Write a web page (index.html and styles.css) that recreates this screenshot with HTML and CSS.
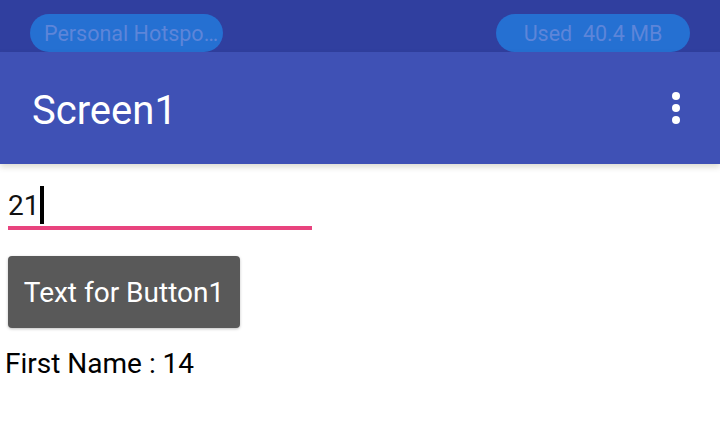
FILE: index.html
```html
<!DOCTYPE html>
<html lang="en">

<head>
    <meta charset="UTF-8">
    <meta name="viewport" content="width=device-width, initial-scale=1.0">
    <link rel="stylesheet" href="styles.css">
    <title>Screen1</title>
</head>

<body>
    <!-- Status bar -->
    <div class="status-bar">
        <span class="pill pill-left">Personal Hotspo…</span>
        <span class="pill pill-right">Used&nbsp; 40.4 MB</span>
    </div>

    <!-- Title bar -->
    <div class="toolbar">
        <h1>Screen1</h1>
        <svg class="menu" width="12" height="36" viewBox="0 0 12 36">
            <circle cx="6" cy="6" r="4" fill="#fff" />
            <circle cx="6" cy="18" r="4" fill="#fff" />
            <circle cx="6" cy="30" r="4" fill="#fff" />
        </svg>
    </div>

    <div class="content">
        <div class="text-box">
            <span class="value">21</span><span class="cursor"></span>
        </div>

        <button type="button">Text for Button1</button>

        <p class="label">First Name : 14</p>
    </div>
</body>

</html>
```

FILE: styles.css
```css
body {
    font-family: 'Roboto', sans-serif;
    margin: 0;
    padding: 0;
    background-color: #fff;
}

.status-bar {
    height: 52px;
    background-color: #303f9f;
    display: flex;
    justify-content: space-between;
    align-items: flex-start;
    padding: 14px 30px 0 30px;
    box-sizing: border-box;
}

.pill {
    height: 38px;
    border-radius: 19px;
    background-color: #2570d2;
    color: #5d85d9;
    font-size: 21.5px;
    line-height: 40px;
    text-align: center;
    white-space: nowrap;
    box-sizing: border-box;
}

.pill-left {
    width: 193px;
    padding-left: 9px;
}

.pill-right {
    width: 194px;
}

.toolbar {
    height: 112px;
    background-color: #3f51b5;
    display: flex;
    align-items: center;
    justify-content: space-between;
    padding: 4px 38px 0 32px;
    box-sizing: border-box;
    box-shadow: 0 3px 6px rgba(60, 60, 0, 0.18);
    position: relative;
}

.toolbar h1 {
    margin: 0;
    font-size: 40px;
    font-weight: 400;
    color: #fff;
}

.toolbar .menu {
    margin-top: -4px;
}

.content {
    padding: 20px 8px 0 8px;
}

.text-box {
    width: 304px;
    height: 42px;
    border-bottom: 4px solid #e8437e;
    display: flex;
    align-items: center;
}

.value {
    font-size: 28px;
    color: #111;
}

.cursor {
    width: 4px;
    height: 38px;
    background-color: #000;
    margin-left: 1px;
}

button {
    margin-top: 26px;
    width: 232px;
    height: 72px;
    background-color: #595959;
    color: #fff;
    border: none;
    border-radius: 4px;
    font-family: 'Roboto', sans-serif;
    font-size: 28px;
    padding: 0;
    box-shadow: 0 1px 3px rgba(0, 0, 0, 0.25);
}

.label {
    margin: 19px 0 0 -3px;
    font-size: 28px;
    color: #000;
}
```
